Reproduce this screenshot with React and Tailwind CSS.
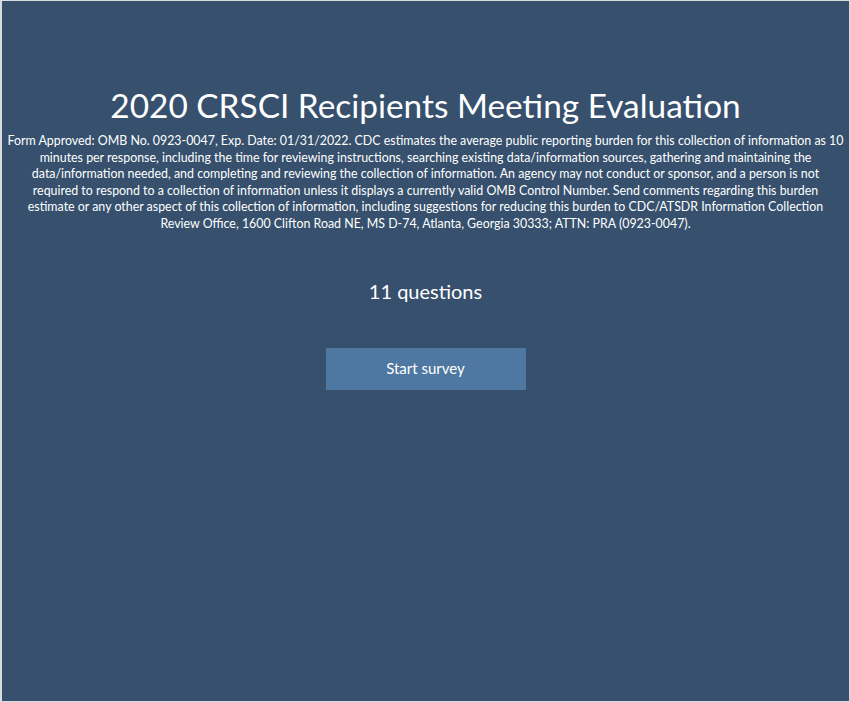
export default function App() {
  return (
    <div
      className="w-[850px] h-[702px] bg-[#36506d] border-l-2 border-t border-r border-b border-[#d9dde2] text-white flex flex-col items-center"
      style={{ fontFamily: 'Lato, "Open Sans", sans-serif' }}
    >
      <h1 className="mt-[84px] text-[33.4px] leading-[40px] text-center whitespace-nowrap">
        2020 CRSCI Recipients Meeting Evaluation
      </h1>
      <p className="mt-[8px] text-[12.4px] leading-[16.6px] text-center whitespace-nowrap">
        Form Approved: OMB No. 0923-0047, Exp. Date: 01/31/2022. CDC estimates the average public reporting burden for this collection of information as 10
        <br />
        minutes per response, including the time for reviewing instructions, searching existing data/information sources, gathering and maintaining the
        <br />
        data/information needed, and completing and reviewing the collection of information. An agency may not conduct or sponsor, and a person is not
        <br />
        required to respond to a collection of information unless it displays a currently valid OMB Control Number. Send comments regarding this burden
        <br />
        estimate or any other aspect of this collection of information, including suggestions for reducing this burden to CDC/ATSDR Information Collection
        <br />
        Review Office, 1600 Clifton Road NE, MS D-74, Atlanta, Georgia 30333; ATTN: PRA (0923-0047).
      </p>
      <div className="mt-[45px] text-[20px] leading-[26px]">11 questions</div>
      <button className="mt-[44px] w-[200px] h-[42px] bg-[#4e78a1] text-white text-[15px]">
        Start survey
      </button>
    </div>
  );
}
